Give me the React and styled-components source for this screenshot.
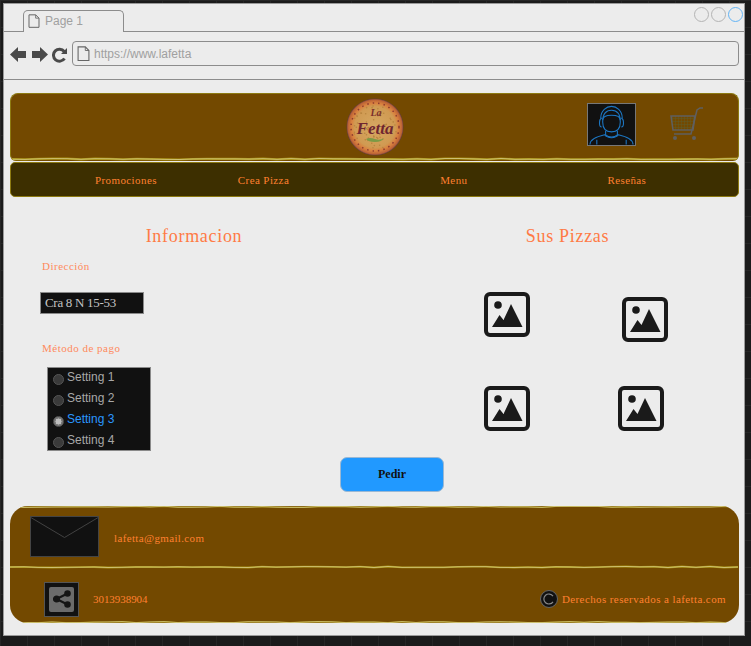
import React from 'react';
import styled, { createGlobalStyle } from 'styled-components';

const GlobalStyle = createGlobalStyle`
  html, body {
    margin: 0;
    padding: 0;
    height: 646px;
    overflow: hidden;
    background-color: #1b1b1b;
    background-image:
      linear-gradient(#262626 1px, transparent 1px),
      linear-gradient(90deg, #262626 1px, transparent 1px);
    background-size: 27px 27px;
  }
`;

const serif = `"Liberation Serif", "DejaVu Serif", serif`;
const sans = `"Liberation Sans", Arial, sans-serif`;

const nextRandom = (value) => (value * 9301 + 49297) % 233280;

// jagged hand-drawn divider, same seed gives the same line
const jagged = (width, seed, level) => {
  let value = seed;
  const points = [];
  for (let x = 0; x <= width; x += 14) {
    value = nextRandom(value);
    points.push(`${x},${(level + (value / 233280) * 1.1 - 0.55).toFixed(1)}`);
  }
  return points.join(' ');
};

const Seam = ({ width = 729, seed = 7, level = 2, band = 1.8 }) => (
  <SeamSvg width={width} height="5" viewBox={`0 0 ${width} 5`}>
    <polyline points={jagged(width, seed, level)} fill="none" stroke="#a8920f" strokeWidth={band} />
    <polyline points={jagged(width, seed, level)} fill="none" stroke="#ded6a0" strokeWidth="0.7" />
  </SeamSvg>
);

const FileIcon = ({ size = 14 }) => (
  <svg width={size} height={size * 1.18} viewBox="0 0 14 17">
    <path d="M1 1h8l4 4v11H1z" fill="#ececec" stroke="#666" strokeWidth="1.2" />
    <path d="M9 1v4h4" fill="none" stroke="#666" />
  </svg>
);

const PictureIcon = () => (
  <svg width="46" height="45" viewBox="0 0 46 45">
    <rect x="2" y="2" width="42" height="41" rx="4" fill="none" stroke="#1a1a1a" strokeWidth="4" />
    <circle cx="14" cy="13" r="3.800" fill="#1a1a1a" />
    <path d="M8 35 L15.500 23 L19.500 28 L27 12 L38.500 35 Z" fill="#1a1a1a" />
  </svg>
);

// pepper specks on the pizza
const specks = () => {
  let value = 5;
  const list = [];
  for (let i = 0; i < 60; i += 1) {
    value = nextRandom(value);
    const angle = (value / 233280) * Math.PI * 2;
    value = nextRandom(value);
    const radius = 6 + (value / 233280) * 17;
    value = nextRandom(value);
    list.push({
      cx: 29 + Math.cos(angle) * radius,
      cy: 29 + Math.sin(angle) * radius,
      fill: value % 3 === 0 ? '#d0703a' : value % 3 === 1 ? '#e0c080' : '#b8843f',
    });
  }
  return list;
};

const Logo = () => (
  <svg width="58" height="58" viewBox="0 0 58 58">
    <defs>
      <radialGradient id="crust" cx="50%" cy="50%" r="50%">
        <stop offset="0" stopColor="#d6a862" />
        <stop offset="0.72" stopColor="#d09a52" />
        <stop offset="0.84" stopColor="#d9803e" />
        <stop offset="0.95" stopColor="#bb6236" />
        <stop offset="1" stopColor="#5e3a3c" />
      </radialGradient>
    </defs>
    <circle cx="29" cy="29" r="28.500" fill="url(#crust)" />
    {specks().map((s) => (
      <circle key={`${s.cx}-${s.cy}`} cx={s.cx} cy={s.cy} r="0.800" fill={s.fill} />
    ))}
    <circle cx="29" cy="29" r="24" fill="none" stroke="#8e3b2e" strokeWidth="1.500" strokeDasharray="1.500 4" />
    <text x="30" y="18" textAnchor="middle" fontFamily={serif} fontSize="10" fontStyle="italic" fontWeight="700" fill="#7a2f2c">La</text>
    <text x="29" y="36" textAnchor="middle" fontFamily={serif} fontSize="17" fontStyle="italic" fontWeight="700" fill="#6f2630">Fetta</text>
    <path d="M20 41q4-2 9 0t9-1q-2 4-9 4t-9-3z" fill="#7c9a45" />
  </svg>
);

const Avatar = () => (
  <svg width="47" height="41" viewBox="0 0 48 41" fill="none" stroke="#1c77c4" strokeWidth="1.100">
    <path d="M15 18c0-9 4-12 9-12s9 3 9 12c0 7-4 10-9 10s-9-3-9-10z" />
    <path d="M15 16c0-3 3-5 9-5s9 2 9 5" />
    <path d="M14 23c-3 0-3-8 0-9M34 23c3 0 3-8 0-9" />
    <path d="M13 14c0-8 6-12 11-12s11 4 11 12" />
    <path d="M18 27v4c3 3 9 3 12 0v-4" />
    <path d="M2 41c0-5 6-8 15-10c3 4 11 4 14 0c9 2 15 5 15 10" />
    <path d="M9 41v-5M39 41v-5" />
  </svg>
);

const Cart = () => (
  <svg width="36" height="36" viewBox="0 0 36 36">
    <defs>
      <pattern id="mesh" width="3" height="3" patternUnits="userSpaceOnUse">
        <path d="M3 0H0V3" fill="none" stroke="#5d5c2c" strokeWidth="1" />
      </pattern>
    </defs>
    <path d="M2 10h24l-2 14H4z" fill="url(#mesh)" stroke="#5f5f5f" strokeWidth="1.500" />
    <path d="M34 2h-3l-3 2-6 24H5" fill="none" stroke="#5f5f5f" strokeWidth="1.500" />
    <circle cx="6" cy="32" r="2" fill="#5f5f5f" />
    <circle cx="25" cy="32" r="2" fill="#5f5f5f" />
  </svg>
);

const Radio = ({ label, selected }) => (
  <RadioRow $selected={selected}>
    <RadioDot $selected={selected} />
    {label}
  </RadioRow>
);

const App = function () {
  return (
    <>
      <GlobalStyle />
      <Browser>
        <TabBar>
          <Tab>
            <FileIcon size={12} />
            Page 1
          </Tab>
          <Controls>
            <Circle />
            <Circle />
            <Circle $active />
          </Controls>
        </TabBar>

        <AddressRow>
          <NavIcons>
            <svg width="17" height="17" viewBox="0 0 17 17"><path d="M0 8.500 8 1v4h8v7H8v4z" fill="#4a4a4a" /></svg>
            <svg width="17" height="17" viewBox="0 0 17 17"><path d="M17 8.500 9 1v4H1v7h8v4z" fill="#4a4a4a" /></svg>
            <svg width="15" height="16" viewBox="0 0 15 16">
              <path d="M12.500 11.500a6 6 0 1 1 -.3-7" fill="none" stroke="#4a4a4a" strokeWidth="3" />
              <path d="M15 1v6H9z" fill="#4a4a4a" />
            </svg>
          </NavIcons>
          <Address>
            <FileIcon size={13} />
            https://www.lafetta
          </Address>
        </AddressRow>

        <Page>
          <Header>
            <HeaderRow>
              <LogoSlot><Logo /></LogoSlot>
              <AvatarBox><Avatar /></AvatarBox>
              <CartSlot><Cart /></CartSlot>
            </HeaderRow>
            <Seam seed={11} band={2.2} />
          </Header>

          <Nav>
            <NavLink>Promociones</NavLink>
            <NavLink $gap={81}>Crea Pizza</NavLink>
            <NavLink $gap={151}>Menu</NavLink>
            <NavLink $gap={140}>Reseñas</NavLink>
          </Nav>

          <Columns>
            <FormColumn>
              <Title $shift={-32}>Informacion</Title>
              <Label>Dirección</Label>
              <AddressInput>Cra 8 N 15-53</AddressInput>
              <Label $top={26}>Método de pago</Label>
              <RadioList>
                <Radio label="Setting 1" />
                <Radio label="Setting 2" />
                <Radio label="Setting 3" selected />
                <Radio label="Setting 4" />
              </RadioList>
            </FormColumn>

            <PizzaColumn>
              <Title $shift={12}>Sus Pizzas</Title>
              <PizzaGrid>
                <PizzaCell><PictureIcon /></PizzaCell>
                <PizzaCell $x={4} $y={5}><PictureIcon /></PizzaCell>
                <PizzaCell><PictureIcon /></PizzaCell>
                <PizzaCell><PictureIcon /></PizzaCell>
              </PizzaGrid>
            </PizzaColumn>
          </Columns>

          <OrderRow>
            <OrderButton>Pedir</OrderButton>
          </OrderRow>

          <Footer>
            <Seam seed={23} level={0.8} band={1.2} />
            <FooterRow $height={54} $padding={20}>
              <MailBox>
                <svg width="69" height="41" viewBox="0 0 69 41" fill="none" stroke="#444" strokeWidth="1">
                  <path d="M0 0 34.500 20.500 69 0" />
                </svg>
              </MailBox>
              <FooterText $gap={15}>lafetta@gmail.com</FooterText>
            </FooterRow>
            <Seam seed={57} />
            <FooterRow $height={48} $padding={34} $top={10}>
              <ShareBox>
                <ShareInner>
                  <svg width="20" height="20" viewBox="0 0 20 20" fill="#151515" stroke="#151515" strokeWidth="2.200">
                    <path d="M15.500 4.500 4.500 10l11 5.500" fill="none" />
                    <circle cx="15.500" cy="4.500" r="2.200" />
                    <circle cx="4.500" cy="10" r="2.500" />
                    <circle cx="15.500" cy="15.500" r="2.200" />
                  </svg>
                </ShareInner>
              </ShareBox>
              <FooterText $gap={14} $spacing={-0.05}>3013938904</FooterText>
              <Copyright>
                <svg width="18" height="18" viewBox="0 0 18 18" fill="none">
                  <circle cx="9" cy="9" r="8.500" fill="#111" stroke="#666" />
                  <path d="M13 6.200a5 5 0 1 0 0 5.600" stroke="#888" strokeWidth="1.200" />
                </svg>
                <FooterText $gap={4} $spacing={0.4}>Derechos reservados a lafetta.com</FooterText>
              </Copyright>
            </FooterRow>
            <Seam seed={91} level={4.2} band={1.2} />
          </Footer>
        </Page>
      </Browser>
    </>
  );
};

export default App;

const Browser = styled.div`
  box-sizing: border-box;
  width: 742px;
  height: 633px;
  margin: 3px 0 0 3px;
  background: #ececec;
  border: 1px solid #9a9a9a;
  display: flex;
  flex-direction: column;
`;

const TabBar = styled.div`
  box-sizing: border-box;
  height: 28px;
  flex: none;
  display: flex;
  align-items: flex-end;
  justify-content: space-between;
  padding-left: 19px;
  border-bottom: 1px solid #8c8c8c;
`;

const Tab = styled.div`
  box-sizing: border-box;
  width: 101px;
  height: 22px;
  margin-bottom: -1px;
  padding: 3px 0 0 4px;
  display: flex;
  align-items: flex-start;
  gap: 5px;
  background: #ececec;
  border: 1px solid #8c8c8c;
  border-bottom: none;
  border-radius: 5px 5px 0 0;
  font: 12px ${sans};
  color: #a0a0a0;
`;

const Controls = styled.div`
  display: flex;
  gap: 2px;
  align-self: flex-start;
  margin: 3px 1px 0 0;
`;

const Circle = styled.span`
  box-sizing: border-box;
  width: 15px;
  height: 15px;
  border-radius: 50%;
  border: 1px solid ${(p) => (p.$active ? '#63b4f5' : '#b4b4b4')};
`;

const AddressRow = styled.div`
  box-sizing: border-box;
  height: 48px;
  flex: none;
  display: flex;
  align-items: flex-start;
  gap: 5px;
  padding: 9px 5px 0 6px;
  border-bottom: 1px solid #8c8c8c;
`;

const NavIcons = styled.div`
  display: flex;
  align-items: center;
  gap: 4px;
  height: 27px;
`;

const Address = styled.div`
  box-sizing: border-box;
  flex: 1;
  height: 25px;
  padding-left: 4px;
  display: flex;
  align-items: center;
  gap: 4px;
  border: 1px solid #8c8c8c;
  border-radius: 4px;
  font: 12px ${sans};
  color: #a0a0a0;
`;

const Page = styled.div`
  flex: 1;
  padding: 13px 5px 0 6px;
  display: flex;
  flex-direction: column;
`;

const Header = styled.header`
  box-sizing: border-box;
  width: 729px;
  height: 68px;
  flex: none;
  background: #734900;
  border: 1px solid #8d7a12;
  border-bottom: none;
  border-radius: 8px 8px 6px 6px;
  overflow: hidden;
`;

const HeaderRow = styled.div`
  height: 63px;
  display: flex;
  align-items: center;
`;

const LogoSlot = styled.div`
  margin: 3px 0 0 335px;
  display: flex;
`;

const AvatarBox = styled.div`
  box-sizing: border-box;
  width: 49px;
  height: 43px;
  margin: -3px 0 0 183px;
  background: #111;
  border: 1px solid #777;
  display: flex;
`;

const CartSlot = styled.div`
  margin: -3px 0 0 33px;
  display: flex;
`;

const SeamSvg = styled.svg`
  display: block;
  flex: none;
`;

const Nav = styled.nav`
  box-sizing: border-box;
  width: 729px;
  height: 35px;
  flex: none;
  margin-top: 1px;
  padding-left: 84px;
  display: flex;
  align-items: center;
  background: #3d2f00;
  border: 1px solid #8d7a12;
  border-radius: 5px;
`;

const NavLink = styled.a`
  margin-left: ${(p) => p.$gap || 0}px;
  font: 11px ${serif};
  letter-spacing: 0.4px;
  color: #ff8030;
`;

const Columns = styled.div`
  display: flex;
  height: 260px;
  flex: none;
`;

const FormColumn = styled.div`
  width: 374px;
  padding: 28px 6px 0 32px;
  box-sizing: border-box;
`;

const PizzaColumn = styled.div`
  width: 355px;
  padding-top: 28px;
  box-sizing: border-box;
`;

const Title = styled.h2`
  margin: 0 0 0 ${(p) => p.$shift}px;
  font: 400 18px/22px ${serif};
  letter-spacing: 0.7px;
  color: #ff7a45;
  text-align: center;
`;

const Label = styled.div`
  margin: ${(p) => p.$top || 11}px 0 0 0;
  font: 11px/16px ${serif};
  letter-spacing: 0.5px;
  color: #ff8a5c;
`;

const AddressInput = styled.div`
  box-sizing: border-box;
  width: 104px;
  height: 22px;
  margin: 18px 0 0 -2px;
  padding-left: 4px;
  background: #111;
  border: 1px solid #8a8a8a;
  font: 13px/20px ${serif};
  letter-spacing: -0.3px;
  color: #c4c4c4;
`;

const RadioList = styled.div`
  box-sizing: border-box;
  width: 104px;
  height: 84px;
  margin: 11px 0 0 5px;
  padding: 0 0 0 5px;
  background: #111;
  border: 1px solid #8a8a8a;
  display: grid;
  grid-auto-rows: 21px;
`;

const RadioRow = styled.div`
  display: flex;
  align-items: center;
  gap: 3px;
  padding-bottom: 4px;
  font: 12px ${sans};
  color: ${(p) => (p.$selected ? '#2a97ff' : '#a8a8a8')};
`;

const RadioDot = styled.span`
  box-sizing: border-box;
  width: 11px;
  height: 11px;
  margin-top: 5px;
  border-radius: 50%;
  border: 1px solid #555;
  background: ${(p) => (p.$selected
    ? 'radial-gradient(circle, #bdbdbd 45%, #777 50%)'
    : '#3a3a3a')};
`;

const PizzaGrid = styled.div`
  display: grid;
  grid-template-columns: 134px 46px;
  grid-auto-rows: 94px;
  margin: 45px 0 0 100px;
`;

const PizzaCell = styled.div`
  margin: ${(p) => p.$y || 0}px 0 0 ${(p) => p.$x || 0}px;
`;

const OrderRow = styled.div`
  display: flex;
  justify-content: flex-start;
  flex: none;
  padding-left: 330px;
`;

const OrderButton = styled.button`
  box-sizing: border-box;
  width: 104px;
  height: 35px;
  padding: 0;
  background: #2199ff;
  border: 1px solid #9ab8d4;
  border-radius: 7px;
  font: 700 12px ${serif};
  color: #111;
`;

const Footer = styled.footer`
  box-sizing: border-box;
  width: 729px;
  height: 117px;
  margin-top: 14px;
  flex: none;
  background: #734900;
  border-radius: 18px;
  overflow: hidden;
`;

const FooterRow = styled.div`
  box-sizing: border-box;
  height: ${(p) => p.$height}px;
  padding-left: ${(p) => p.$padding}px;
  padding-top: ${(p) => p.$top || 0}px;
  display: flex;
  align-items: center;
`;

const MailBox = styled.div`
  box-sizing: border-box;
  width: 69px;
  height: 41px;
  margin-top: -3px;
  background: #111;
  border: 1px solid #444;
  overflow: hidden;
  display: flex;
  justify-content: center;
`;

const FooterText = styled.span`
  margin-left: ${(p) => p.$gap}px;
  font: 11px ${serif};
  letter-spacing: ${(p) => p.$spacing ?? 0.35}px;
  color: #ff8030;
`;

const ShareBox = styled.div`
  box-sizing: border-box;
  width: 35px;
  height: 35px;
  padding: 4px;
  background: #111;
  border: 1px solid #555;
`;

const ShareInner = styled.div`
  width: 25px;
  height: 25px;
  background: #6b6b6b;
  border-radius: 2px;
  display: flex;
  align-items: center;
  justify-content: center;
`;

const Copyright = styled.div`
  margin-left: auto;
  padding-right: 13px;
  display: flex;
  align-items: center;
`;
